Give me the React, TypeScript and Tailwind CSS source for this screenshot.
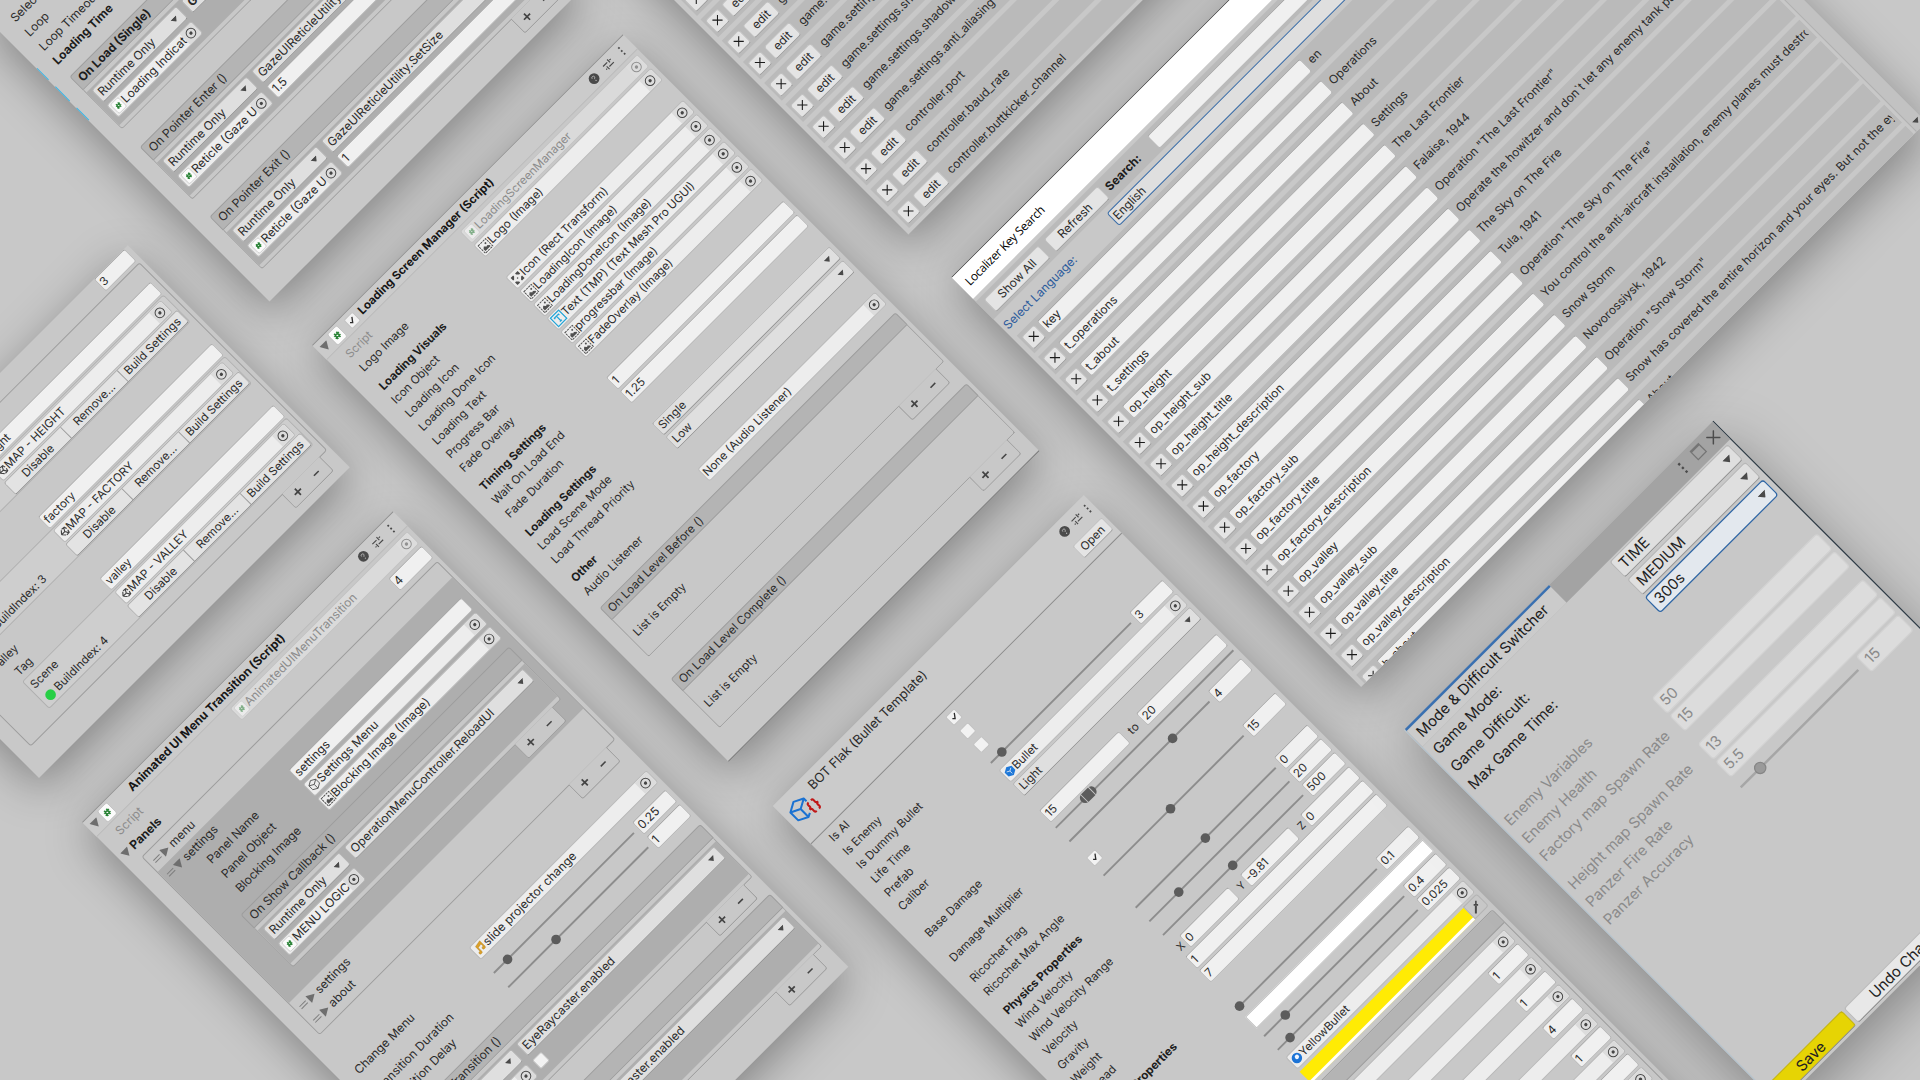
import React from "react";

type Kids = { children?: React.ReactNode };

/* ---------- icons ---------- */

const Fold = ({ open }: { open?: boolean }) => (
  <svg viewBox="0 0 10 10" className="size-[10px] shrink-0 fill-[#6e6e6e]">
    {open ? <path d="M0 1h10L5 9.5z" /> : <path d="M1 0v10l8.500-5z" />}
  </svg>
);

const Caret = () => (
  <svg viewBox="0 0 8 5" className="h-[5px] w-[8px] shrink-0 fill-[#4a4a4a]">
    <path d="M0 0h8L4 5z" />
  </svg>
);

const Picker = ({ dim }: { dim?: boolean }) => (
  <span className="flex h-full w-[17px] shrink-0 items-center justify-center rounded-r-[2px] bg-[#dcdcdc]">
    <svg viewBox="0 0 12 12" className={dim ? "size-[12px] opacity-50" : "size-[12px]"}>
      <circle cx="6" cy="6" r="5" fill="none" stroke="#454545" strokeWidth="1" />
      <circle cx="6" cy="6" r="1.7" fill="#454545" />
    </svg>
  </span>
);

const ScriptIcon = ({ big, dim }: { big?: boolean; dim?: boolean }) => (
  <svg viewBox="0 0 14 14" className={`${big ? "size-[17px]" : "size-[14px]"} shrink-0 ${dim ? "opacity-50" : ""}`}>
    <rect x="1.5" y="0.600" width="11" height="12.800" rx="1.600" fill="#fbfbfb" stroke="#b9b9b9" strokeWidth="0.600" />
    <path d="M6.100 4.200 5.400 9.800M8.700 4.200 8 9.800M4.400 5.900h5.600M4.100 8.100h5.600" stroke="#2b8438" strokeWidth="1.400" fill="none" />
  </svg>
);

const ImageIcon = () => (
  <svg viewBox="0 0 14 14" className="size-[13px] shrink-0" fill="none" stroke="#505050" strokeWidth="1.100">
    <rect x="1.200" y="1.200" width="11.600" height="11.600" strokeDasharray="2.600 0.900" />
    <path d="M3 11V8l2.300-2 2.200 2.500 1.300-1L11 9.500V11z" fill="#505050" stroke="none" />
    <circle cx="9.200" cy="4.700" r="1.100" fill="#505050" stroke="none" />
  </svg>
);

const RectIcon = () => (
  <svg viewBox="0 0 14 14" className="size-[13px] shrink-0 fill-[#4c4c4c]">
    <path d="M1.500 1.500h4v1.500L3 5.500H1.500zM12.500 1.500v4H11L8.500 3V1.500zM1.500 12.500v-4H3L5.500 11v1.500zM12.500 12.500h-4V11L11 8.500h1.500z" />
    <circle cx="7" cy="7" r=".8" />
  </svg>
);

const TextIcon = () => (
  <svg viewBox="0 0 14 14" className="size-[14px] shrink-0" fill="none" stroke="#22a5d8" strokeWidth="1.300">
    <rect x="1" y="1" width="12" height="12" />
    <path d="M4 5.200V3.800h6v1.400M7 3.800v6.600M5.600 10.400h2.800" />
  </svg>
);

const CubeIcon = () => (
  <svg viewBox="0 0 14 14" className="size-[13px] shrink-0" fill="none" stroke="#555" strokeWidth="1">
    <path d="M7 1l5.300 3v6L7 13l-5.300-3V4zM1.700 4L7 7l5.300-3M7 7v6" />
  </svg>
);

const PrefabIcon = () => (
  <svg viewBox="0 0 14 14" className="size-[12px] shrink-0">
    <path d="M7 .5l5.800 3.200v6.600L7 13.500l-5.800-3.200V3.700z" fill="#1f78d8" />
    <path d="M3.500 4.800L7 6.800l3.500-2M7 6.800v4" stroke="#dfeaf6" strokeWidth="1" fill="none" />
  </svg>
);

const MaterialIcon = () => (
  <svg viewBox="0 0 14 14" className="size-[12px] shrink-0">
    <circle cx="7" cy="7" r="6.300" fill="#1d74d6" />
    <circle cx="8" cy="6" r="2.600" fill="#f0f6ff" />
  </svg>
);

const NoteIcon = () => (
  <svg viewBox="0 0 14 14" className="size-[13px] shrink-0" fill="#dba02a" stroke="#a8781a" strokeWidth="0.400">
    <path d="M4 2.500l8-1.500v8.500a2 1.600 0 1 1-1.500-1.500V4.500l-5 1V11a2 1.600 0 1 1-1.500-1.500z" />
  </svg>
);

const UnityIcon = () => (
  <svg viewBox="0 0 14 14" className="size-[11px] shrink-0" fill="none" stroke="#444" strokeWidth="1.500">
    <path d="M2 7l4-4.500M2 7l4 4.500M2 7h6M8 7l2.500-4.500M8 7l2.500 4.500M7 2l4.500 .300L12.500 6M7 12l4.500-.300L12.500 8" />
  </svg>
);

const Help = () => (
  <svg viewBox="0 0 14 14" className="size-[13px] shrink-0">
    <circle cx="7" cy="7" r="6" fill="#4a4a4a" />
    <path d="M5.400 5.700c0-2.200 3.400-2.100 3.400 0 0 1.200-1.700 1.300-1.700 2.300" stroke="#b9b9b9" strokeWidth="1" fill="none" />
    <circle cx="7.100" cy="10" r=".7" fill="#b9b9b9" />
  </svg>
);

const Sliders = () => (
  <svg viewBox="0 0 14 14" className="size-[13px] shrink-0" stroke="#4a4a4a" strokeWidth="1.300">
    <path d="M1 4.500h6.500M11 4.500h2M1 9.500h1.500M6 9.500h7M9.700 2.200v4.600M4 7.200v4.600" />
  </svg>
);

const Dots = () => (
  <svg viewBox="0 0 4 14" className="h-[13px] w-[4px] shrink-0 fill-[#4a4a4a]">
    <rect x="1" y="1.500" width="2" height="2" />
    <rect x="1" y="6" width="2" height="2" />
    <rect x="1" y="10.500" width="2" height="2" />
  </svg>
);

const Plus = () => (
  <svg viewBox="0 0 10 10" className="size-[10px]" stroke="#444" strokeWidth="1.800">
    <path d="M5 0.500v9M0.500 5h9" />
  </svg>
);

const Minus = () => (
  <svg viewBox="0 0 10 10" className="size-[10px]" stroke="#444" strokeWidth="1.600">
    <path d="M1.500 5h7" />
  </svg>
);

const Cross = () => (
  <svg viewBox="0 0 10 10" className="size-[9px]" stroke="#1b1b1b" strokeWidth="1.200">
    <path d="M1 1l8 8M9 1L1 9" />
  </svg>
);

/* ---------- controls ---------- */

const Field = ({ children, className = "w-full" }: Kids & { className?: string }) => (
  <div className={`flex h-[18px] items-center overflow-hidden rounded-[3px] border border-[#b7b7b7] border-t-[#a3a3a3] bg-[#f0f0f0] pl-[2px] whitespace-nowrap ${className}`}>
    {children}
  </div>
);

const Obj = ({ icon, text, dim, className = "w-full" }: { icon?: React.ReactNode; text?: string; dim?: boolean; className?: string }) => (
  <div
    className={`flex h-[18px] min-w-0 items-center overflow-hidden rounded-[3px] border whitespace-nowrap ${
      dim ? "border-[#c3c3c3] bg-[#dadada] text-[#8c8c8c]" : "border-[#b9b9b9] bg-[#ededed]"
    } ${className}`}
  >
    <div className="flex min-w-0 flex-1 items-center overflow-hidden pl-[1px]">
      {icon}
      <span>{text}</span>
    </div>
    <Picker dim={dim} />
  </div>
);

const Drop = ({ text, className = "w-full" }: { text?: string; className?: string }) => (
  <div className={`flex h-[18px] items-center justify-between overflow-hidden rounded-[3px] border border-[#b4b4b4] border-b-[#949494] bg-[#dfdfdf] pr-[6px] pl-[3px] whitespace-nowrap ${className}`}>
    <span>{text}</span>
    <Caret />
  </div>
);

const Check = ({ on }: { on?: boolean }) => (
  <span className="flex size-[13px] shrink-0 items-center justify-center rounded-[2px] border border-[#c2c2c2] bg-[#f2f2f2]">
    {on && (
      <svg viewBox="0 0 10 10" className="size-[8px]" fill="none" stroke="#2c2c2c" strokeWidth="1.700">
        <path d="M1.500 5.500l2.500 2.500 4.500-6" />
      </svg>
    )}
  </span>
);

const Track = ({ at }: { at: number }) => (
  <div className="relative h-[2px] flex-1 bg-[#8d8d8d]">
    <span className="absolute top-[-4px] -ml-[5px] size-[10px] rounded-full bg-[#5c5c5c]" style={{ left: `${at}%` }} />
  </div>
);

const SliderField = ({ at, value }: { at: number; value: string }) => (
  <div className="flex w-full items-center gap-[6px]">
    <Track at={at} />
    <Field className="w-[49px]">{value}</Field>
  </div>
);

type RowProps = Kids & { label?: string; bold?: boolean; dim?: boolean; fold?: React.ReactNode; className?: string };

const Row = ({ label, bold, dim, fold, className = "h-5", children }: RowProps) => (
  <div className={`flex shrink-0 items-center pr-1 ${className}`}>
    <div className="w-[18px] shrink-0 pl-[5px]">{fold}</div>
    <div className={`w-[173px] shrink-0 whitespace-nowrap ${bold ? "font-bold text-[#1c1c1c]" : ""} ${dim ? "text-[#8c8c8c]" : ""}`}>{label}</div>
    <div className="flex min-w-0 flex-1 items-center">{children}</div>
  </div>
);

const Heading = ({ children }: Kids) => (
  <div className="flex h-[27px] shrink-0 items-end pb-[1px] pl-[19px] font-bold text-[#1c1c1c]">{children}</div>
);

const PlusMinus = ({ className = "mr-[11px]" }: { className?: string }) => (
  <div className={`relative -mt-px ml-auto grid h-[21px] w-[56px] shrink-0 grid-cols-2 place-items-center rounded-b-[3px] border border-t-0 border-[#9d9d9d] bg-[#c8c8c8] ${className}`}>
    <Plus />
    <Minus />
  </div>
);

const EmptyEvent = ({ title, className = "" }: { title: string; className?: string }) => (
  <div className={`mr-1 ml-[18px] flex shrink-0 flex-col ${className}`}>
    <div className="flex h-[18px] items-center rounded-t-[3px] border border-[#9d9d9d] bg-[#b4b4b4] pl-[5px]">{title}</div>
    <div className="h-[54px] rounded-b-[3px] border border-t-0 border-[#9d9d9d] pt-[18px] pl-[6px] leading-[18px]">List is Empty</div>
    <PlusMinus />
  </div>
);

type EventProps = {
  title: string;
  func: string;
  target: string;
  arg?: React.ReactNode;
  bold?: boolean;
  footer?: boolean;
  narrow?: boolean;
  head?: string;
  className?: string;
};

const Event = ({ title, func, target, arg, bold, footer = true, narrow, head = "bg-[#b4b4b4]", className = "mr-1 ml-[18px]" }: EventProps) => {
  const col = narrow ? "w-[112px] shrink-0" : "w-[124px] shrink-0";
  return (
    <div className={`flex shrink-0 flex-col ${className}`}>
      <div className={`flex h-[20px] items-center rounded-t-[3px] border border-[#9d9d9d] pl-[5px] ${head} ${bold ? "font-bold text-[#1c1c1c]" : ""}`}>{title}</div>
      <div className="h-[57px] rounded-b-[3px] border border-t-0 border-[#9d9d9d] bg-[#c8c8c8] pt-[4px]">
        <div className="flex h-[48px] flex-col gap-[4px] bg-[#aeaeae] pt-[2px] pr-[5px] pl-[5px]">
          <div className="flex gap-[7px]">
            <Drop text="Runtime Only" className={col} />
            <Drop text={func} className={bold ? "min-w-0 flex-1 font-bold" : "min-w-0 flex-1"} />
          </div>
          <div className="flex items-center gap-[7px]">
            <Obj icon={<ScriptIcon />} text={target} className={col} />
            {arg}
          </div>
        </div>
      </div>
      {footer ? <PlusMinus className="mr-[12px]" /> : <div className="h-[20px]" />}
    </div>
  );
};

const Header = ({ title, check, iconPad = "pr-[11px]" }: { title: string; check?: boolean; iconPad?: string }) => (
  <div className={`flex h-[22px] shrink-0 items-center border-t border-b border-t-[#8f8f8f] border-b-[#bababa] bg-[#cbcbcb] pl-[4px] ${iconPad}`}>
    <Fold open />
    <div className="ml-[3px] flex">
      <ScriptIcon big />
    </div>
    <div className="flex w-[25px] justify-center pl-[1px]">{check && <Check on />}</div>
    <span className="flex-1 font-bold whitespace-nowrap text-[#161616]">{title}</span>
    <div className="flex items-center">
      <Help />
      <span className="ml-[8px] flex">
        <Sliders />
      </span>
      <span className="ml-[11px] flex">
        <Dots />
      </span>
    </div>
  </div>
);

const SHADOW = "shadow-[-7px_11px_46px_rgba(0,0,0,0.34)]";

const Inspector = ({ className, children }: Kids & { className: string }) => (
  <section
    className={`absolute flex w-[454.5px] origin-top-left -rotate-45 scale-[0.966] flex-col bg-[#c8c8c8] leading-[16px] text-[#2b2b2b] ${SHADOW} ${className}`}
  >
    {children}
  </section>
);

/* ---------- windows ---------- */

const GazeWindow = () => (
  <Inspector className="top-[16.2px] left-[-16.2px] h-[418px] text-[12.45px]">
    <div className="absolute top-[77px] left-0 flex h-[76px] w-px flex-col justify-between">
      <i className="h-[17px] bg-[#35b5e8]" />
      <i className="h-[21px] bg-[#35b5e8]" />
      <i className="h-[18px] bg-[#35b5e8]" />
    </div>
    <Row label="Selection Time" className="mt-[14px] h-[20.7px]" />
    <Row label="Loop" className="h-[20.7px]" />
    <Row label="Loop Timeout" className="h-[20.7px]" />
    <Row label="Loading Time" bold className="h-[20.7px]" />
    <Event
      title="On Load (Single)"
      bold
      func="GazeUIReticleUtility.Load"
      target="Loading Indicat"
      footer={false}
      className="mt-[10.7px] mr-1 ml-[18px]"
    />
    <Event
      title="On Pointer Enter ()"
      func="GazeUIReticleUtility.SetSize"
      target="Reticle (Gaze UI"
      arg={<Field className="flex-1">1.5</Field>}
      footer={false}
      className="mt-[5.5px] mr-1 ml-[18px]"
    />
    <Event
      title="On Pointer Exit ()"
      func="GazeUIReticleUtility.SetSize"
      target="Reticle (Gaze UI"
      arg={<Field className="flex-1">1</Field>}
      className="mt-[5.5px] mr-1 ml-[18px]"
    />
  </Inspector>
);

const scenes = [
  { tag: "height", map: "MAP - HEIGHT", index: 2 },
  { tag: "factory", map: "MAP - FACTORY", index: 3 },
  { tag: "valley", map: "MAP - VALLEY", index: 4 },
];

const SceneWindow = () => (
  <Inspector className="top-[556px] left-[-182.7px] h-[325px] text-[12px]">
    <div className="flex h-[17px] justify-end pr-[5px]">
      <Field className="w-[45px]">3</Field>
    </div>
    <div className="mt-[4px] mr-1 ml-[17px] flex h-[275px] flex-col rounded-[3px] border border-[#9d9d9d]">
      {scenes.map((s) => (
        <div key={s.tag} className="flex h-[90px] shrink-0 flex-col pr-[5px]">
          <div className="flex h-5 items-center gap-[2px] pl-[17px]">
            <Fold open />
            {s.tag}
          </div>
          <div className="flex h-5 items-center pl-[42px]">
            <span className="w-[130px] shrink-0">Tag</span>
            <Field>{s.tag}</Field>
          </div>
          <div className="ml-[40px] flex h-[40px] flex-col rounded-[3px] border border-[#b0b0b0] bg-[#cecece]">
            <div className="flex h-5 items-center pr-[5px] pl-[3px]">
              <span className="w-[129px] shrink-0">Scene</span>
              <Obj icon={<UnityIcon />} text={s.map} />
            </div>
            <div className="flex h-[18px] items-center pl-[5px]">
              <i className="size-[11px] shrink-0 rounded-full bg-[#27cf45]" />
              <span className="ml-[3px] w-[112px] shrink-0">BuildIndex: {s.index}</span>
              <div className="grid h-[18px] w-full grid-cols-[82px_83px_1fr] divide-x divide-[#9a9a9a] rounded-[3px] border border-[#adadad] border-b-[#8f8f8f] bg-[#e3e3e3] text-center whitespace-nowrap">
                <span>Disable</span>
                <span>Remove...</span>
                <span>Build Settings</span>
              </div>
            </div>
          </div>
        </div>
      ))}
    </div>
    <PlusMinus className="mr-[14px]" />
  </Inspector>
);

const Handle = () => <i className="h-[4px] w-[9px] border-y border-[#7d7d7d]" />;

const ListItem = ({ children, open, className = "" }: Kids & { open?: boolean; className?: string }) => (
  <div className={`flex h-[20px] shrink-0 items-center pl-[5px] ${className}`}>
    <Handle />
    <span className="mr-[3px] ml-[2px] flex">
      <Fold open={open} />
    </span>
    {children}
  </div>
);

const Nested = ({ label, children }: Kids & { label: string }) => (
  <div className="flex h-[20.7px] shrink-0 items-center pr-[8px] pl-[45px]">
    <span className="w-[125px] shrink-0">{label}</span>
    {children}
  </div>
);

const MenuWindow = () => (
  <Inspector className="top-[821.7px] left-[81.7px] h-[666.6px] text-[12.45px]">
    <Header title="Animated UI Menu Transition (Script)" iconPad="pr-[12px]" />
    <Row label="Script" dim className="mt-[1.500px] h-[20.7px]">
      <Obj dim icon={<ScriptIcon dim />} text="AnimatedUIMenuTransition" />
    </Row>
    <Row label="Panels" bold fold={<Fold open />} className="h-[20.7px]">
      <Field className="ml-auto w-[49px]">4</Field>
    </Row>
    <div className="mt-[4px] mr-1 ml-[18px] flex h-[261px] shrink-0 flex-col rounded-[3px] border border-[#9d9d9d] pt-[2px]">
      <ListItem>menu</ListItem>
      <div className="flex h-[192px] shrink-0 flex-col bg-[#aeaeae]">
        <ListItem open>settings</ListItem>
        <Nested label="Panel Name">
          <Field>settings</Field>
        </Nested>
        <Nested label="Panel Object">
          <Obj icon={<CubeIcon />} text="Settings Menu" />
        </Nested>
        <Nested label="Blocking Image">
          <Obj icon={<ImageIcon />} text="Blocking Image (Image)" />
        </Nested>
        <Event
          title="On Show Callback ()"
          func="OperationMenuController.ReloadUI"
          target="MENU LOGIC"
          narrow
          head="bg-[#aeaeae]"
          className="mt-[10.5px] mr-[9px] ml-[29px]"
        />
      </div>
      <ListItem className="mt-[2px]">settings</ListItem>
      <ListItem>about</ListItem>
    </div>
    <PlusMinus className="mr-[16px]" />
    <Row label="Change Menu" className="mt-[24px] h-5">
      <Obj icon={<NoteIcon />} text="slide projector change" />
    </Row>
    <Row label="Transition Duration" className="mt-[8px] h-5">
      <SliderField at={10} value="0.25" />
    </Row>
    <Row label="Transition Delay" className="mt-[1px] h-5">
      <SliderField at={34} value="1" />
    </Row>
    <Event title="On Start Transition ()" func="EyeRaycaster.enabled" target="Main Camera" arg={<Check />} className="mt-[11px] mr-1 ml-[18px]" />
    <Event title="On Finish Transition ()" func="EyeRaycaster.enabled" target="Main Camera" arg={<Check on />} className="mt-[5px] mr-1 ml-[18px]" />
  </Inspector>
);

const LoadingWindow = () => (
  <Inspector className="top-[345px] left-[312.2px] h-[610px] border-b border-[#777] text-[12px]">
    <Header title="Loading Screen Manager (Script)" check />
    <Row label="Script" dim className="mt-[2px] h-5">
      <Obj dim icon={<ScriptIcon dim />} text="LoadingScreenManager" />
    </Row>
    <Row label="Logo Image">
      <Obj icon={<ImageIcon />} text="Logo (Image)" />
    </Row>
    <Heading>Loading Visuals</Heading>
    <Row label="Icon Object">
      <Obj icon={<RectIcon />} text="Icon (Rect Transform)" />
    </Row>
    <Row label="Loading Icon">
      <Obj icon={<ImageIcon />} text="LoadingIcon (Image)" />
    </Row>
    <Row label="Loading Done Icon">
      <Obj icon={<ImageIcon />} text="LoadingDoneIcon (Image)" />
    </Row>
    <Row label="Loading Text">
      <Obj icon={<TextIcon />} text="Text (TMP) (Text Mesh Pro UGUI)" />
    </Row>
    <Row label="Progress Bar">
      <Obj icon={<ImageIcon />} text="progressbar (Image)" />
    </Row>
    <Row label="Fade Overlay">
      <Obj icon={<ImageIcon />} text="FadeOverlay (Image)" />
    </Row>
    <Heading>Timing Settings</Heading>
    <Row label="Wait On Load End">
      <Field>1</Field>
    </Row>
    <Row label="Fade Duration">
      <Field>1.25</Field>
    </Row>
    <Heading>Loading Settings</Heading>
    <Row label="Load Scene Mode">
      <Drop text="Single" />
    </Row>
    <Row label="Load Thread Priority">
      <Drop text="Low" />
    </Row>
    <Heading>Other</Heading>
    <Row label="Audio Listener">
      <Obj text="None (Audio Listener)" />
    </Row>
    <EmptyEvent title="On Load Level Before ()" className="mt-[11px]" />
    <EmptyEvent title="On Load Level Complete ()" className="mt-[12px]" />
  </Inspector>
);

const Btn = ({ children, className = "" }: Kids & { className?: string }) => (
  <div className={`flex h-[18px] shrink-0 items-center justify-center rounded-[3px] border border-[#c0c0c0] border-b-[#9c9c9c] bg-[#e4e4e4] ${className}`}>{children}</div>
);

const prefs = [
  "game.settings.resolution",
  "game.settings.quality",
  "game.settings.vsync",
  "game.settings.language",
  "game.settings.volume",
  "game.settings.music",
  "game.settings.textures",
  "game.settings.effects",
  "game.settings.shadows",
  "game.settings.shadow_quality",
  "game.settings.shadow_distance",
  "game.settings.anti_aliasing",
  "controller.port",
  "controller.baud_rate",
  "controller.buttkicker_channel",
];

const PrefsWindow = () => (
  <section
    className={`absolute top-[-105px] left-[569.2px] flex h-[480px] w-[460px] origin-top-left -rotate-45 flex-col justify-end gap-[5px] bg-[#c8c8c8] pr-[5px] pb-[4px] pl-[5px] text-[12px] leading-[16px] text-[#2b2b2b] ${SHADOW}`}
  >
    {prefs.map((p) => (
      <div key={p} className="flex h-[25px] shrink-0 items-center bg-[#bababa] pl-[2px]">
        <Btn className="w-[18px]">
          <Cross />
        </Btn>
        <Btn className="ml-[5px] w-[36px]">edit</Btn>
        <span className="ml-[7px]">{p}</span>
      </div>
    ))}
  </section>
);

const entries: [string, string][] = [
  ["key", "en"],
  ["t_operations", "Operations"],
  ["t_about", "About"],
  ["t_settings", "Settings"],
  ["op_height", "The Last Frontier"],
  ["op_height_sub", "Falaise, 1944"],
  ["op_height_title", 'Operation "The Last Frontier"'],
  ["op_height_description", "Operate the howitzer and don`t let any enemy tank pass through the front line"],
  ["op_factory", "The Sky on The Fire"],
  ["op_factory_sub", "Tula, 1941"],
  ["op_factory_title", 'Operation "The Sky on The Fire"'],
  ["op_factory_description", "You control the anti-aircraft installation, enemy planes must destroy"],
  ["op_valley", "Snow Storm"],
  ["op_valley_sub", "Novorossiysk, 1942"],
  ["op_valley_title", 'Operation "Snow Storm"'],
  ["op_valley_description", "Snow has covered the entire horizon and your eyes. But not the eyes"],
  ["b_about", "About"],
];

const LocalizerWindow = () => (
  <section
    className={`absolute top-[276.6px] left-[951.4px] flex h-[580px] w-[799px] origin-top-left -rotate-45 flex-col overflow-hidden bg-[#c8c8c8] text-[12px] leading-[16px] text-[#2b2b2b] ${SHADOW}`}
  >
    <div className="flex h-[31px] shrink-0 items-center border-t border-[#444] bg-white pl-[7px] font-['Open_Sans',sans-serif] text-[12px] tracking-[-0.35px] text-black">
      Localizer Key Search
    </div>
    <div className="mt-[4px] flex h-[25px] shrink-0 items-center bg-[#bababa] pr-[4px] pl-[7px]">
      <Btn className="w-[77px]">Show All</Btn>
      <Btn className="ml-[8px] w-[76px] pr-[5px]">Refresh</Btn>
      <span className="ml-[5px] w-[65px] shrink-0 font-bold text-[#1c1c1c]">Search:</span>
      <Field>{""}</Field>
    </div>
    <div className="flex h-[27px] shrink-0 items-center pr-[4px] pl-[3px]">
      <span className="w-[152px] shrink-0 pt-[1px] text-[#2c5b9c]">Select Language:</span>
      <div className="flex h-[18px] w-full items-center rounded-[3px] border border-[#3a6da8] bg-[#dfdfdf] pl-[2px]">English</div>
    </div>
    <div className="flex min-h-0 flex-1 justify-between">
      <div className="flex w-[782px] flex-col gap-[5px] overflow-hidden pt-[1px] pl-[5px]">
        {entries.map(([k, v]) => (
          <div key={k} className="flex h-[25px] shrink-0 items-center overflow-hidden bg-[#bababa] pr-[4px] pl-[2px]">
            <Btn className="w-[18px]">
              <Cross />
            </Btn>
            <Field className="ml-[4px] w-[372px] shrink-0">{k}</Field>
            <span className="ml-[5px] flex-1 overflow-hidden whitespace-nowrap">{v}</span>
          </div>
        ))}
      </div>
      <div className="flex w-[14px] flex-col items-center justify-end border-l border-[#b0b0b0] bg-[#c2c2c2] pb-[5px]">
        <Caret />
      </div>
    </div>
  </section>
);

const Vec = ({ axis, value }: { axis: string; value: string }) => (
  <div className="flex flex-1 items-center">
    <span className="w-[11px] shrink-0 pl-[1px] text-[11px]">{axis}</span>
    <Field>{value}</Field>
  </div>
);

const BulletWindow = () => (
  <Inspector className="top-[806px] left-[772.7px] h-[1000px] text-[12px]">
    <div className="flex h-[56px] shrink-0 border-b border-[#8a8a8a] bg-[#cbcbcb] pr-[3px] pl-[5px]">
      <svg viewBox="0 0 34 30" className="mt-[9px] h-[30px] w-[34px]" fill="none">
        <g stroke="#1b72d2" strokeWidth="2.100" strokeLinejoin="round">
          <path d="M23 12V8L13 3 3 8.500v11.500L13 25l4-2" />
          <path d="M3 8.500l10 5 10-5.500M13 13.500V25" />
        </g>
        <g stroke="#c01818" strokeWidth="2.200">
          <path d="M23.500 14.500c-3 0-2 2-2 3.800s-.5 2.200-2.500 2.200c2 0 2.500 .4 2.500 2.200s-1 3.800 2 3.800" />
          <path d="M27 14.500c3 0 2 2 2 3.800s.5 2.200 2.500 2.200c-2 0-2.500 .4-2.500 2.200s1 3.800-2 3.800" />
        </g>
      </svg>
      <div className="mt-[5px] ml-[2px] flex-1 text-[13.400px]">BOT Flak (Bullet Template)</div>
      <div className="flex flex-col items-end">
        <div className="mt-[6px] flex pr-[2px]">
          <Help />
          <span className="ml-[5px] flex">
            <Sliders />
          </span>
          <span className="ml-[7px] flex">
            <Dots />
          </span>
        </div>
        <Btn className="mt-[10px] w-[43px]">Open</Btn>
      </div>
    </div>
    <Row label="Is AI" className="mt-[1px] h-5">
      <Check on />
    </Row>
    <Row label="Is Enemy">
      <Check />
    </Row>
    <Row label="Is Dummy Bullet">
      <Check />
    </Row>
    <Row label="Life Time" className="mt-[1px] h-5">
      <SliderField at={8} value="3" />
    </Row>
    <Row label="Prefab">
      <Obj icon={<PrefabIcon />} text="Bullet" />
    </Row>
    <Row label="Caliber">
      <Drop text="Light" />
    </Row>
    <Row label="Base Damage" className="mt-[19px] h-5">
      <Field className="w-[117px]">15</Field>
      <span className="w-[25px] text-center">to</span>
      <Field className="flex-1">20</Field>
    </Row>
    <Row className="h-[11px]">
      <div className="relative h-[2px] flex-1 bg-[#8d8d8d]">
        <span className="absolute top-[-5px] left-[14.5%] flex h-[11px] w-[20px] justify-between rounded-full bg-[#5c5c5c] px-[4px]">
          <i className="w-px bg-[#c8c8c8]" />
          <i className="w-px bg-[#c8c8c8]" />
        </span>
      </div>
    </Row>
    <Row label="Damage Multiplier" className="mt-[5px] h-5">
      <SliderField at={74} value="4" />
    </Row>
    <Row label="Ricochet Flag" className="mt-[10px] h-5">
      <Check on />
    </Row>
    <Row label="Ricochet Max Angle">
      <SliderField at={48} value="15" />
    </Row>
    <Heading>Physics Properties</Heading>
    <Row label="Wind Velocity">
      <SliderField at={50} value="0" />
    </Row>
    <Row label="Wind Velocity Range">
      <SliderField at={21} value="20" />
    </Row>
    <Row label="Velocity">
      <SliderField at={50} value="500" />
    </Row>
    <Row label="Gravity" className="mt-px h-5">
      <div className="flex w-full gap-[6px]">
        <Vec axis="X" value="0" />
        <Vec axis="Y" value="-9.81" />
        <Vec axis="Z" value="0" />
      </div>
    </Row>
    <Row label="Weight">
      <Field>1</Field>
    </Row>
    <Row label="Spread">
      <Field>7</Field>
    </Row>
    <Heading>Visual Properties</Heading>
    <Row label="Width">
      <SliderField at={2} value="0.1" />
    </Row>
    <Row label="Color">
      <div className="h-[17px] w-full border border-[#c0c0c0] bg-white" />
    </Row>
    <Row label="Length">
      <SliderField at={15} value="0.4" />
    </Row>
    <Row label="Time">
      <SliderField at={9} value="0.025" />
    </Row>
    <Row label="Material">
      <Obj icon={<MaterialIcon />} text="YellowBullet" />
    </Row>
    <Row label="Emission">
      <div className="h-[17px] flex-1 border-b-[3px] border-white bg-[#ffeb04]" />
      <div className="flex h-[18px] w-[20px] items-center justify-center rounded-r-[3px] border border-[#b4b4b4]">
        <svg viewBox="0 0 14 14" className="size-[13px]" stroke="#4a4a4a" fill="none">
          <path d="M2 12l6-6" strokeWidth="2.200" />
          <path d="M7 3.500l3.500 3.500M9 5l3-3" strokeWidth="1.800" />
        </svg>
      </div>
    </Row>
    <div className="mt-[4px] mr-1 ml-[18px] flex flex-1 flex-col rounded-t-[3px] border border-[#9d9d9d]">
      <div className="mb-[3px] flex h-[18px] shrink-0 items-center border-b border-[#9d9d9d] bg-[#b4b4b4] pl-[5px]">Effects</div>
      {["1", "1", "4", "1", "1", "1"].map((n, i) => (
        <div key={i} className="flex h-[40.2px] shrink-0 flex-col items-end pt-px pr-[5px] pl-[30px]">
          <Obj />
          <Field className="mt-[2px] w-[45px]">{n}</Field>
        </div>
      ))}
    </div>
  </Inspector>
);

const ModeRow = ({ label, dim, className = "", children }: Kids & { label: string; dim?: boolean; className?: string }) => (
  <div className={`flex h-5 shrink-0 items-center pr-[4px] pl-[4.5px] whitespace-nowrap ${dim ? "text-[#8b8b8b]" : "text-[#222]"} ${className}`}>
    <span className="w-[152px] shrink-0">{label}</span>
    {children}
  </div>
);

const DimField = ({ children, className = "w-full" }: Kids & { className?: string }) => (
  <div className={`flex h-[18px] items-center rounded-[3px] border border-[#d2d2d2] bg-[#dcdcdc] pl-[3px] text-[#8b8b8b] ${className}`}>{children}</div>
);

const ModeDrop = ({ text, active }: { text: string; active?: boolean }) => (
  <div
    className={`ml-auto flex h-[18px] w-[134px] shrink-0 items-center justify-between rounded-[3px] border pr-[4px] pl-[4px] ${
      active ? "border-[#2f66a5] bg-[#e3e8ee]" : "border-[#b8b8b8] border-b-[#979797] bg-[#dfdfdf]"
    }`}
  >
    {text}
    <Caret />
  </div>
);

const ModeWindow = () => (
  <section
    className={`absolute top-[729.9px] left-[1404.3px] flex h-[425px] w-[350px] origin-top-left -rotate-45 scale-125 flex-col border-r border-l border-r-[#2d3a45] border-l-[#b4c3cd] bg-[#c8c8c8] text-[12px] leading-[16px] ${SHADOW}`}
  >
    <div className="flex h-5 shrink-0 bg-[#a3a3a3]">
      <div className="flex w-[163px] items-center border-t-2 border-[#3a70b0] bg-[#cbcbcb] pl-[5px] whitespace-nowrap text-[#1c1c1c]">Mode &amp; Difficult Switcher</div>
      <div className="flex flex-1 items-center justify-end pr-[4px] pb-[2px]">
        <Dots />
        <i className="ml-[11px] size-[10px] border border-t-2 border-[#757575]" />
        <svg viewBox="0 0 10 10" className="ml-[7px] size-[9px]" stroke="#4c4c4c" strokeWidth="1.300">
          <path d="M0.500 0.500l9 9M9.500 0.500l-9 9" />
        </svg>
      </div>
    </div>
    <ModeRow label="Game Mode:">
      <ModeDrop text="TIME" />
    </ModeRow>
    <ModeRow label="Game Difficult:">
      <ModeDrop text="MEDIUM" />
    </ModeRow>
    <ModeRow label="Max Game Time:">
      <ModeDrop text="300s" active />
    </ModeRow>
    <ModeRow dim label="Enemy Variables" className="mt-[21px]" />
    <ModeRow dim label="Enemy Health">
      <DimField>50</DimField>
    </ModeRow>
    <ModeRow dim label="Factory map Spawn Rate">
      <DimField>15</DimField>
    </ModeRow>
    <ModeRow dim label="Height map Spawn Rate" className="mt-[12px]">
      <DimField>13</DimField>
    </ModeRow>
    <ModeRow dim label="Panzer Fire Rate">
      <DimField>5.5</DimField>
    </ModeRow>
    <ModeRow dim label="Panzer Accuracy">
      <div className="relative h-[1.5px] flex-1 bg-[#a6a6a6]">
        <span className="absolute top-[-4px] left-[13%] size-[10px] rounded-full border border-[#868686] bg-[#9a9a9a]" />
      </div>
      <DimField className="ml-[6px] w-[48px]">15</DimField>
    </ModeRow>
    <div className="mt-auto mb-[2px] flex shrink-0 gap-[2px] pl-[3px] text-[#222]">
      <div className="flex h-[17px] w-[85px] items-center justify-center rounded-[3px] border border-[#c4b410] border-b-[#8f8f8f] bg-[#e6d404] pr-[2px]">Save</div>
      <div className="flex h-[17px] w-[131px] items-center justify-center rounded-[3px] border border-[#bcbcbc] border-b-[#8f8f8f] bg-[#e8e8e8]">Undo Changes</div>
    </div>
  </section>
);

export default function App() {
  return (
    <main className="relative h-[1080px] w-[1920px] overflow-hidden bg-[#c8c8c8] font-[Inter,sans-serif]">
      <GazeWindow />
      <SceneWindow />
      <MenuWindow />
      <LoadingWindow />
      <PrefsWindow />
      <LocalizerWindow />
      <BulletWindow />
      <ModeWindow />
    </main>
  );
}
